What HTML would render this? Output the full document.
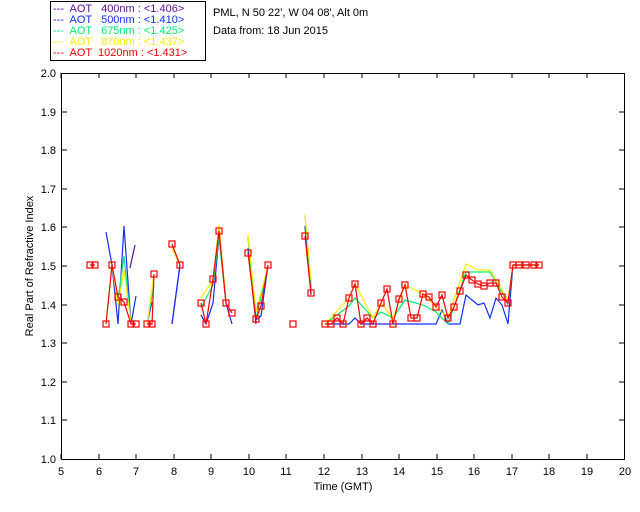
<!DOCTYPE html>
<html><head><style>
body{margin:0;background:#fff;width:640px;height:512px;overflow:hidden}
svg{display:block}
text{font-family:"Liberation Sans",sans-serif;font-size:11px}
.lg{white-space:pre;font-size:11px}
</style></head><body>
<svg width="640" height="512" xmlns="http://www.w3.org/2000/svg">
<rect x="50.5" y="1.5" width="155" height="59" fill="#fff" stroke="#000" stroke-width="1"/>
<text class="lg" x="53" y="12" fill="#6010a0" xml:space="preserve">---  AOT   400nm : &lt;1.406&gt;</text>
<text class="lg" x="53" y="23" fill="#1030ff" xml:space="preserve">---  AOT   500nm : &lt;1.410&gt;</text>
<text class="lg" x="53" y="34" fill="#00ee70" xml:space="preserve">---  AOT   675nm : &lt;1.425&gt;</text>
<text class="lg" x="53" y="45" fill="#ffee00" xml:space="preserve">---  AOT   870nm : &lt;1.437&gt;</text>
<text class="lg" x="53" y="56" fill="#ff0000" xml:space="preserve">---  AOT  1020nm : &lt;1.431&gt;</text>
<text x="213" y="16">PML, N 50 22', W 04 08', Alt 0m</text>
<text x="213" y="34">Data from: 18 Jun 2015</text>
<rect x="61.5" y="73.5" width="563" height="386" fill="none" stroke="#000"/>
<g stroke="#000">
<path d="M61 73v5M99 73v5M136 73v5M174 73v5M211 73v5M249 73v5M286 73v5M324 73v5M362 73v5M399 73v5M437 73v5M474 73v5M512 73v5M549 73v5M587 73v5
M61 459v-5M99 459v-5M136 459v-5M174 459v-5M211 459v-5M249 459v-5M286 459v-5M324 459v-5M362 459v-5M399 459v-5M437 459v-5M474 459v-5M512 459v-5M549 459v-5M587 459v-5
M61 112h6M61 150h6M61 189h6M61 227h6M61 266h6M61 305h6M61 343h6M61 382h6M61 420h6
M625 112h-6M625 150h-6M625 189h-6M625 227h-6M625 266h-6M625 305h-6M625 343h-6M625 382h-6M625 420h-6"/>
</g>
<g font-size="11" text-anchor="end">
<text x="56" y="77">2.0</text><text x="56" y="116">1.9</text><text x="56" y="154">1.8</text><text x="56" y="193">1.7</text><text x="56" y="231">1.6</text><text x="56" y="270">1.5</text><text x="56" y="309">1.4</text><text x="56" y="347">1.3</text><text x="56" y="386">1.2</text><text x="56" y="424">1.1</text><text x="56" y="463">1.0</text>
</g>
<g text-anchor="middle">
<text x="61" y="475">5</text><text x="99" y="475">6</text><text x="136" y="475">7</text><text x="174" y="475">8</text><text x="211" y="475">9</text><text x="249" y="475">10</text><text x="286" y="475">11</text><text x="324" y="475">12</text><text x="362" y="475">13</text><text x="399" y="475">14</text><text x="437" y="475">15</text><text x="474" y="475">16</text><text x="512" y="475">17</text><text x="549" y="475">18</text><text x="587" y="475">19</text><text x="625" y="475">20</text>
<text x="343" y="490">Time (GMT)</text>
<text transform="translate(33,266) rotate(-90)">Real Part of Refractive Index</text>
</g>
<g fill="none" stroke-width="1.2">
<path stroke="#6010a0" d="M130 268L135 245M172 324L180 265M201 315L206 324M219 236L226 300M248 248L256 324M305 226L311 295"/>
<path stroke="#1030ff" d="M106 232L112 265L118 324L124 226L131 324L136 296M147 324L152 302M172 324L180 265M201 315L206 324L213 303L219 236L226 303L232 324M248 248L256 320L261 316L268 265M305 226L311 290M325 324L331 324L337 324L343 324L349 324L355 318L361 324L367 324L373 324L381 324L387 324L393 324L399 324L405 324L411 324L417 324L423 324L429 324L436 324L442 310L448 324L454 324L460 324L466 295L472 300L478 305L484 303L490 318L496 298L502 305L508 324L513 265L539 265"/>
<path stroke="#00ee70" d="M106 324L112 265L118 300L124 256L131 324M147 324L154 285M172 248L180 265M201 308L213 285L219 236L226 303M248 238L256 319L268 265M305 216L311 285M325 324L349 306L355 298L373 318L381 312L393 318L405 300L423 305L436 312L448 324L466 272L478 272L490 272L502 292L508 305L513 265L539 265"/>
<path stroke="#ffee00" d="M106 324L112 265L118 305L124 270L131 324M147 324L154 274M172 248L180 265M201 298L213 280L219 225L226 300M248 235L256 312L268 265M305 215L311 280M325 324L349 298L355 284L373 318L381 303L393 318L405 285L423 294L436 307L448 318L466 264L478 270L490 270L502 290L508 300L513 265L539 265"/>
<path stroke="#ff0000" d="M90 265L95 265M106 324L112 265L118 297L124 302L131 324L136 324M147 324L152 324L154 274M172 244L180 265M201 303L206 324L213 279L219 231L226 303L232 313M248 253L256 319L261 306L268 265M305 236L311 293M325 324L331 324L337 318L343 324L349 298L355 284L361 324L367 318L373 324L381 303L387 289L393 324L399 299L405 285L411 318L417 318L423 294L429 297L436 307L442 295L448 318L454 307L460 291L466 275L472 280L478 284L484 286L490 283L496 283L502 297L508 303L513 265L519 265L526 265L534 265L539 265"/>
</g>
<g fill="none" stroke="#ff0000" stroke-width="1.2">
<rect x="87" y="262" width="6" height="6"/><rect x="92" y="262" width="6" height="6"/><rect x="103" y="321" width="6" height="6"/><rect x="109" y="262" width="6" height="6"/><rect x="115" y="294" width="6" height="6"/><rect x="121" y="299" width="6" height="6"/><rect x="128" y="321" width="6" height="6"/><rect x="133" y="321" width="6" height="6"/><rect x="144" y="321" width="6" height="6"/><rect x="149" y="321" width="6" height="6"/><rect x="151" y="271" width="6" height="6"/><rect x="169" y="241" width="6" height="6"/><rect x="177" y="262" width="6" height="6"/><rect x="198" y="300" width="6" height="6"/><rect x="203" y="321" width="6" height="6"/><rect x="210" y="276" width="6" height="6"/><rect x="216" y="228" width="6" height="6"/><rect x="223" y="300" width="6" height="6"/><rect x="229" y="310" width="6" height="6"/><rect x="245" y="250" width="6" height="6"/><rect x="253" y="316" width="6" height="6"/><rect x="258" y="303" width="6" height="6"/><rect x="265" y="262" width="6" height="6"/><rect x="290" y="321" width="6" height="6"/><rect x="302" y="233" width="6" height="6"/><rect x="308" y="290" width="6" height="6"/>
<rect x="322" y="321" width="6" height="6"/><rect x="328" y="321" width="6" height="6"/><rect x="334" y="315" width="6" height="6"/><rect x="340" y="321" width="6" height="6"/><rect x="346" y="295" width="6" height="6"/><rect x="352" y="281" width="6" height="6"/><rect x="358" y="321" width="6" height="6"/><rect x="364" y="315" width="6" height="6"/><rect x="370" y="321" width="6" height="6"/><rect x="378" y="300" width="6" height="6"/><rect x="384" y="286" width="6" height="6"/><rect x="390" y="321" width="6" height="6"/><rect x="396" y="296" width="6" height="6"/><rect x="402" y="282" width="6" height="6"/><rect x="408" y="315" width="6" height="6"/><rect x="414" y="315" width="6" height="6"/><rect x="420" y="291" width="6" height="6"/><rect x="426" y="294" width="6" height="6"/><rect x="433" y="304" width="6" height="6"/><rect x="439" y="292" width="6" height="6"/><rect x="445" y="315" width="6" height="6"/><rect x="451" y="304" width="6" height="6"/><rect x="457" y="288" width="6" height="6"/><rect x="463" y="272" width="6" height="6"/><rect x="469" y="277" width="6" height="6"/><rect x="475" y="281" width="6" height="6"/><rect x="481" y="283" width="6" height="6"/><rect x="487" y="280" width="6" height="6"/><rect x="493" y="280" width="6" height="6"/><rect x="499" y="294" width="6" height="6"/><rect x="505" y="300" width="6" height="6"/><rect x="510" y="262" width="6" height="6"/><rect x="516" y="262" width="6" height="6"/><rect x="523" y="262" width="6" height="6"/><rect x="531" y="262" width="6" height="6"/><rect x="536" y="262" width="6" height="6"/>
</g>
</svg>
</body></html>
